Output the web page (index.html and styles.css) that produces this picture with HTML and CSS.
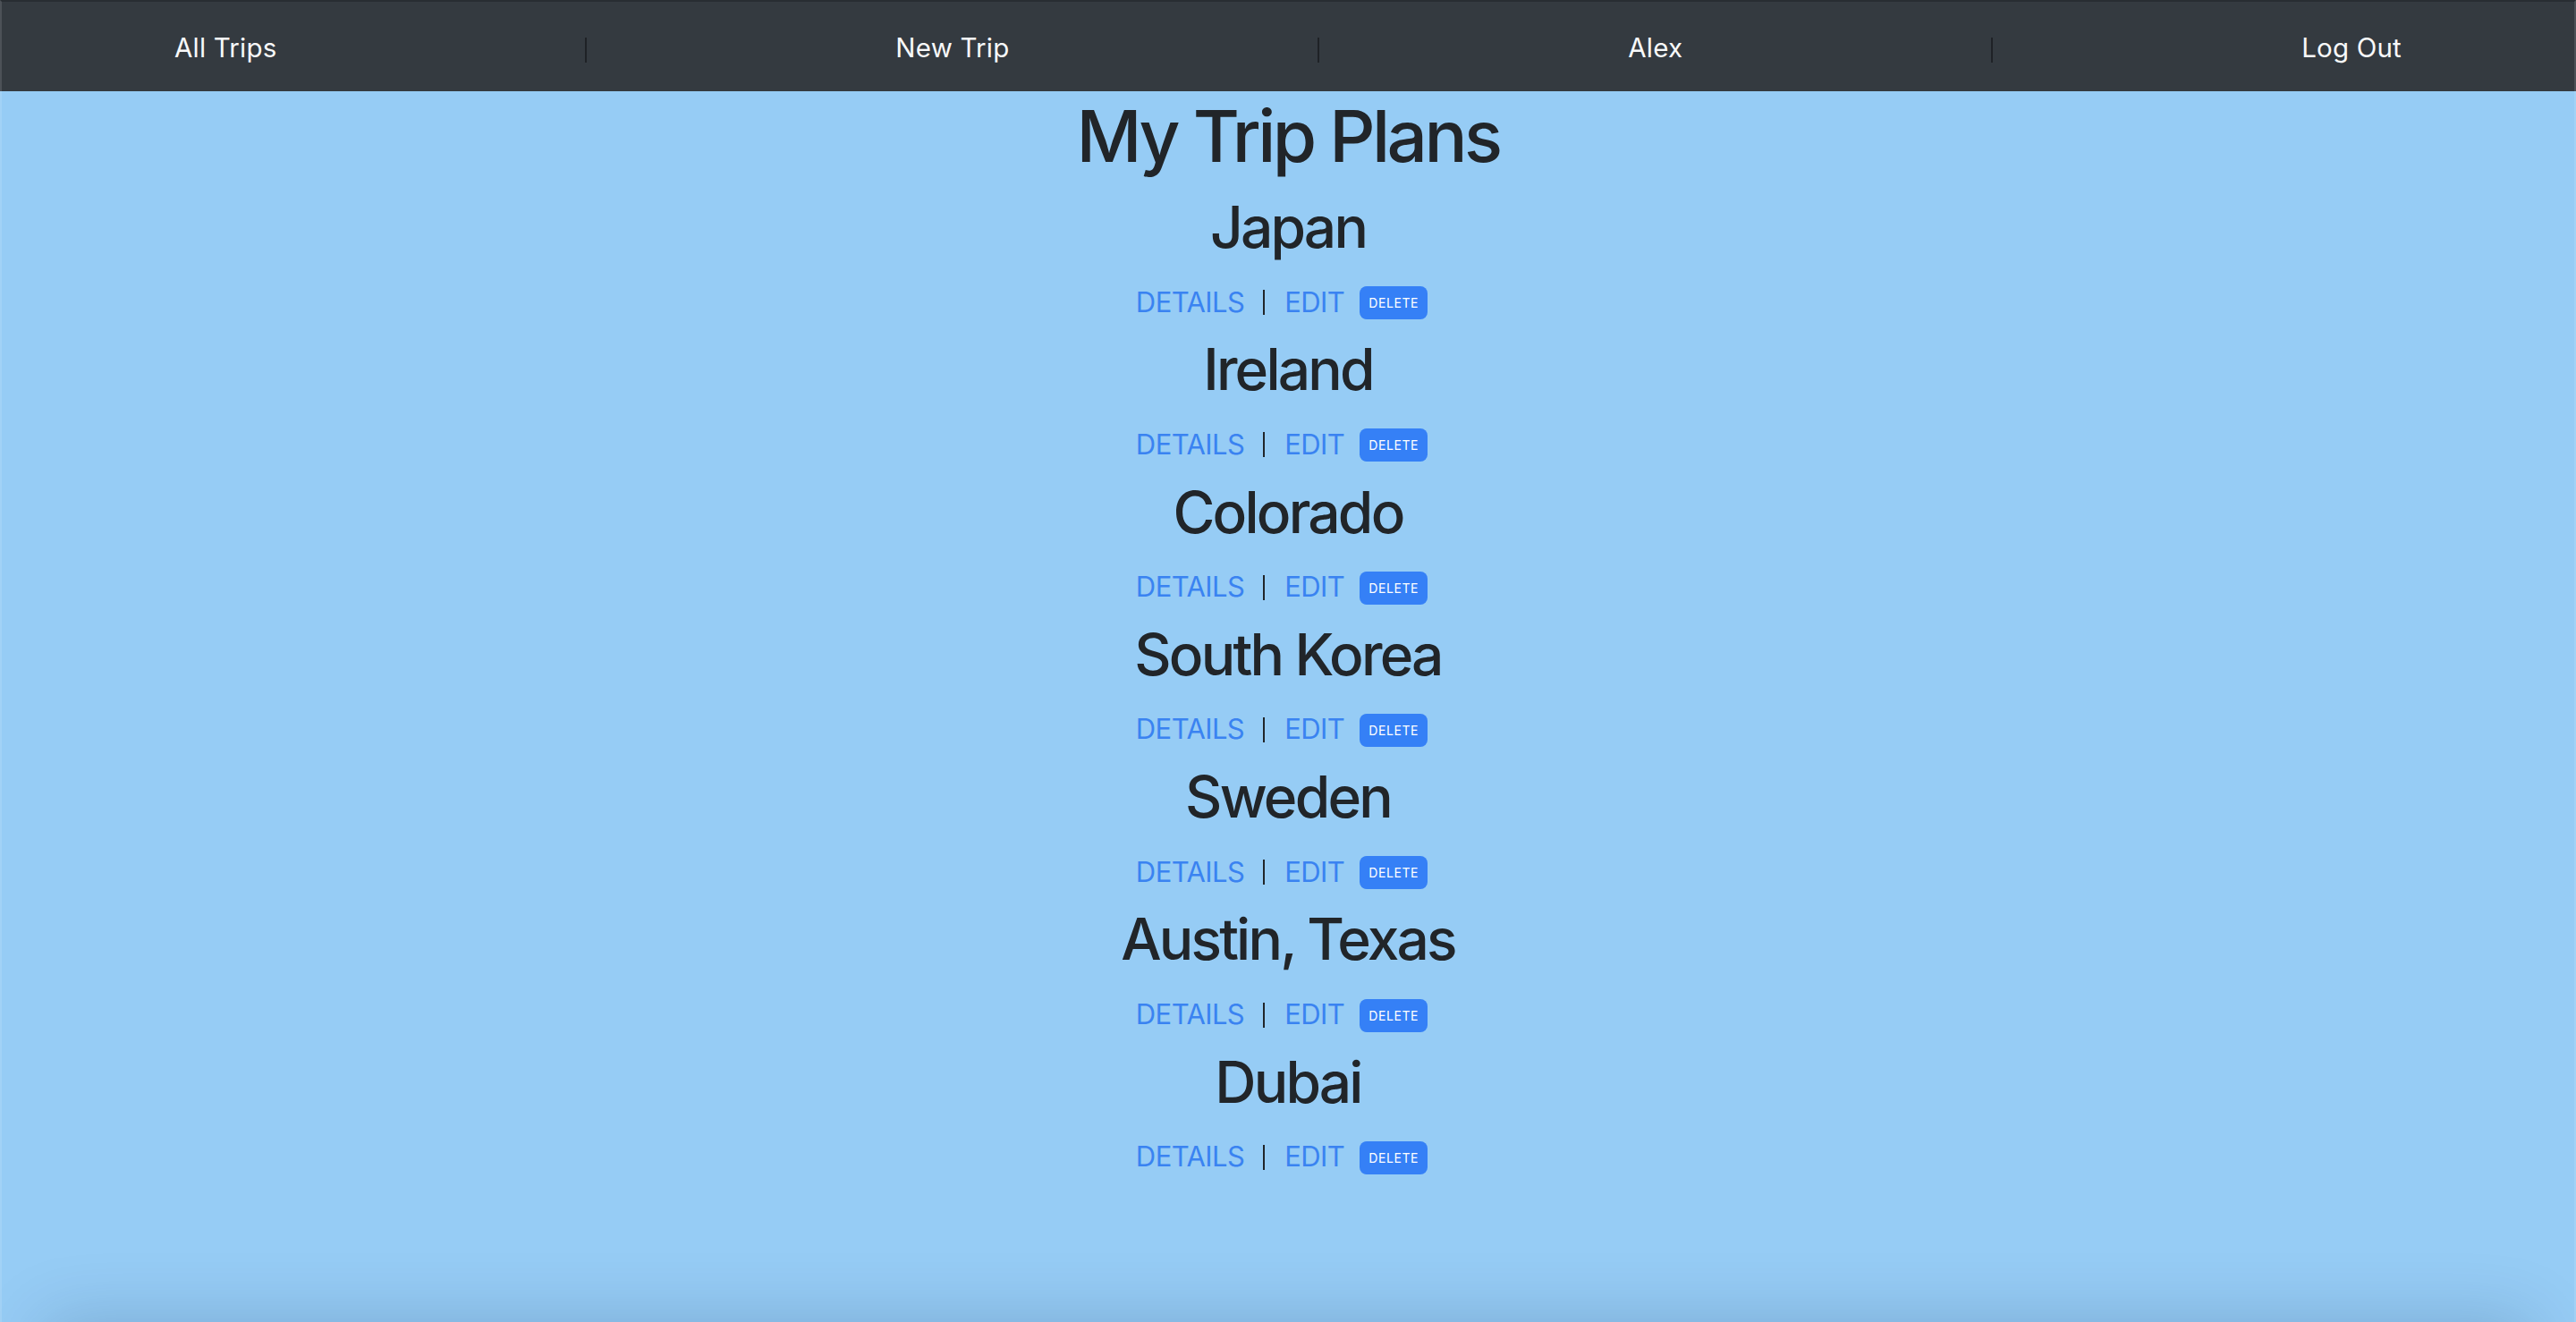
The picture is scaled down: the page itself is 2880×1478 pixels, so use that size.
FILE: index.html
```html
<!DOCTYPE html>
<html lang="en">
<head>
<meta charset="utf-8">
<title>My Trip Plans</title>
<link rel="stylesheet" href="styles.css">
</head>
<body>
<nav class="navbar">
  <a class="nav-link" href="#">All Trips</a>
  <span class="nav-sep"></span>
  <a class="nav-link" href="#">New Trip</a>
  <span class="nav-sep"></span>
  <a class="nav-link" href="#">Alex</a>
  <span class="nav-sep"></span>
  <a class="nav-link" href="#">Log Out</a>
</nav>
<main class="content">
  <h1 class="title">My Trip Plans</h1>
  <section class="trip">
    <h2 class="trip-name">Japan</h2>
    <div class="trip-actions"><a class="action" href="#">DETAILS</a><span class="bar"></span><a class="action" href="#">EDIT</a><button class="btn-delete">DELETE</button></div>
  </section>
  <section class="trip">
    <h2 class="trip-name">Ireland</h2>
    <div class="trip-actions"><a class="action" href="#">DETAILS</a><span class="bar"></span><a class="action" href="#">EDIT</a><button class="btn-delete">DELETE</button></div>
  </section>
  <section class="trip">
    <h2 class="trip-name">Colorado</h2>
    <div class="trip-actions"><a class="action" href="#">DETAILS</a><span class="bar"></span><a class="action" href="#">EDIT</a><button class="btn-delete">DELETE</button></div>
  </section>
  <section class="trip">
    <h2 class="trip-name">South Korea</h2>
    <div class="trip-actions"><a class="action" href="#">DETAILS</a><span class="bar"></span><a class="action" href="#">EDIT</a><button class="btn-delete">DELETE</button></div>
  </section>
  <section class="trip">
    <h2 class="trip-name">Sweden</h2>
    <div class="trip-actions"><a class="action" href="#">DETAILS</a><span class="bar"></span><a class="action" href="#">EDIT</a><button class="btn-delete">DELETE</button></div>
  </section>
  <section class="trip">
    <h2 class="trip-name">Austin, Texas</h2>
    <div class="trip-actions"><a class="action" href="#">DETAILS</a><span class="bar"></span><a class="action" href="#">EDIT</a><button class="btn-delete">DELETE</button></div>
  </section>
  <section class="trip">
    <h2 class="trip-name">Dubai</h2>
    <div class="trip-actions"><a class="action" href="#">DETAILS</a><span class="bar"></span><a class="action" href="#">EDIT</a><button class="btn-delete">DELETE</button></div>
  </section>
</main>
<div class="bottom-shadow"></div>
<div class="frame"></div>
</body>
</html>
```

FILE: styles.css
```css
* { box-sizing: border-box; }

html, body {
  margin: 0;
  padding: 0;
  height: 100%;
}

body {
  background: #96ccf5;
  font-family: Inter, "Noto Sans", "Liberation Sans", sans-serif;
  color: #212529;
  overflow: hidden;
}

.navbar {
  height: 102px;
  background: #343a40;
  display: flex;
  align-items: center;
  justify-content: space-between;
  padding: 4px 195px 0 195px;
}

.nav-link {
  color: #f8f9fa;
  text-decoration: none;
  font-size: 29.5px;
  letter-spacing: 0.2px;
}

.nav-sep {
  width: 2px;
  height: 28px;
  background: #1f2226;
  margin-top: 6px;
}

.content {
  display: flex;
  flex-direction: column;
  align-items: center;
  padding-top: 2px;
}

.title {
  margin: 0 0 16px 0;
  font-size: 80px;
  line-height: 96px;
  font-weight: 500;
  letter-spacing: -3.6px;
}

.trip {
  display: flex;
  flex-direction: column;
  align-items: center;
}

.trip-name {
  margin: 0 0 16px 0;
  font-size: 64px;
  line-height: 76.8px;
  font-weight: 500;
  letter-spacing: -2.8px;
}

.trip-actions {
  height: 50.5px;
  margin-bottom: 16px;
  padding-top: 6px;
  padding-right: 14px;
  display: flex;
  align-items: center;
}

.action {
  color: #3a83f1;
  text-decoration: none;
  font-size: 31px;
  letter-spacing: -0.6px;
}

.bar {
  width: 2px;
  height: 28px;
  background: #212529;
  margin: 2px 22px 0 21px;
}

.btn-delete {
  margin: 3px 0 0 17px;
  width: 76px;
  height: 37px;
  border: 0;
  border-radius: 8px;
  background: #3580f6;
  color: #ffffff;
  font-family: Inter, "Noto Sans", "Liberation Sans", sans-serif;
  font-size: 14px;
  letter-spacing: 0.6px;
  padding: 0;
}

.bottom-shadow {
  position: fixed;
  left: 50px;
  right: 50px;
  top: 100%;
  height: 200px;
  box-shadow: 0 0 80px 0 rgba(0, 30, 70, 0.2);
  pointer-events: none;
}

.frame {
  position: fixed;
  inset: 0;
  border-top: 2px solid rgba(0, 0, 0, 0.22);
  border-left: 2px solid rgba(255, 255, 255, 0.12);
  border-right: 2px solid rgba(255, 255, 255, 0.12);
  pointer-events: none;
}
```
